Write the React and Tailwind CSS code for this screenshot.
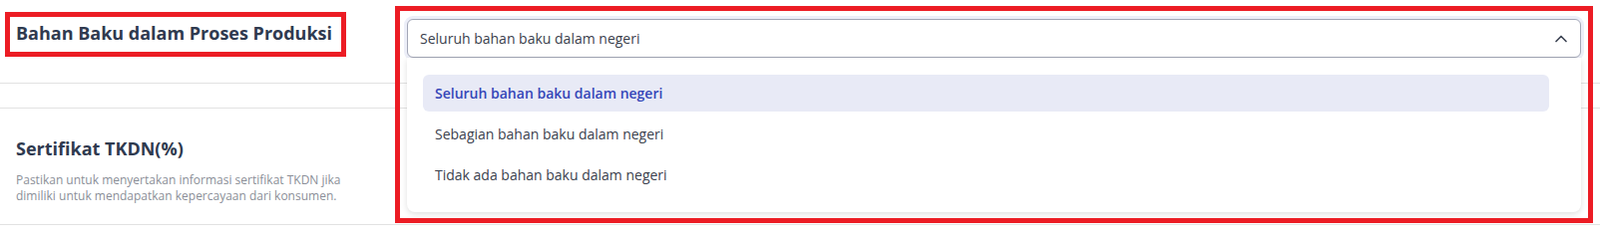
import React from 'react';
import { ChevronUp } from 'lucide-react';

const options = [
  'Seluruh bahan baku dalam negeri',
  'Sebagian bahan baku dalam negeri',
  'Tidak ada bahan baku dalam negeri',
];

const SourceSelect = ({ value }) => (
  <div className="relative">
    <div className="h-[39px] flex items-center justify-between pl-3 pr-[9px] border border-[#a3a7b7] rounded-md ring-[3px] ring-[#eceef8] bg-white">
      <span className="text-[14px] text-[#3b414d]">{value}</span>
      <ChevronUp size={20} strokeWidth={2} className="text-[#3b4252]" />
    </div>
    <div className="absolute left-0 right-0 top-[39px] z-10 bg-white rounded-b-lg shadow-[0_2px_6px_rgba(0,0,0,0.13)] pt-[17px] pb-[19px] pl-4 pr-8 flex flex-col gap-1">
      {options.map((opt) => (
        <div
          key={opt}
          className={
            opt === value
              ? 'h-[37px] flex items-center px-3 rounded-md bg-[#e8eaf6] text-[14px] font-semibold text-[#3546b8]'
              : 'h-[37px] flex items-center px-3 rounded-md text-[14px] text-[#3b414d]'
          }
        >
          {opt}
        </div>
      ))}
    </div>
  </div>
);

export default function App() {
  return (
    <div className="relative w-[1604px] h-[232px] bg-white font-['Open_Sans','Noto_Sans',sans-serif] overflow-hidden">
      <div className="flex h-[84px] border-b border-[#e2e2e2]">
        <div className="w-[408px] pl-4 pt-[21px]">
          <h2 className="text-[18px] leading-6 font-bold text-[#2f3a4f]">Bahan Baku dalam Proses Produksi</h2>
        </div>
        <div className="flex-1 pt-[19px] pr-[19px]">
          <SourceSelect value="Seluruh bahan baku dalam negeri" />
        </div>
      </div>
      <div className="h-[24px]" />
      <div className="flex h-[118px] border-y border-[#e2e2e2]">
        <div className="w-[408px] pl-4 pt-[28px]">
          <h2 className="text-[18px] leading-6 font-bold text-[#2f3a4f]">Sertifikat TKDN(%)</h2>
          <p className="mt-[12px] w-[340px] text-[12px] leading-4 text-[#8b8f98]">
            Pastikan untuk menyertakan informasi sertifikat TKDN jika dimiliki untuk mendapatkan kepercayaan dari konsumen.
          </p>
        </div>
      </div>

      <div className="absolute left-[5px] top-[12px] w-[342px] h-[45px] border-[5px] border-[#ec1c24] pointer-events-none" />
      <div className="absolute left-[396px] top-[6px] w-[1201px] h-[218px] border-[5px] border-[#ec1c24] pointer-events-none z-20" />
    </div>
  );
}
